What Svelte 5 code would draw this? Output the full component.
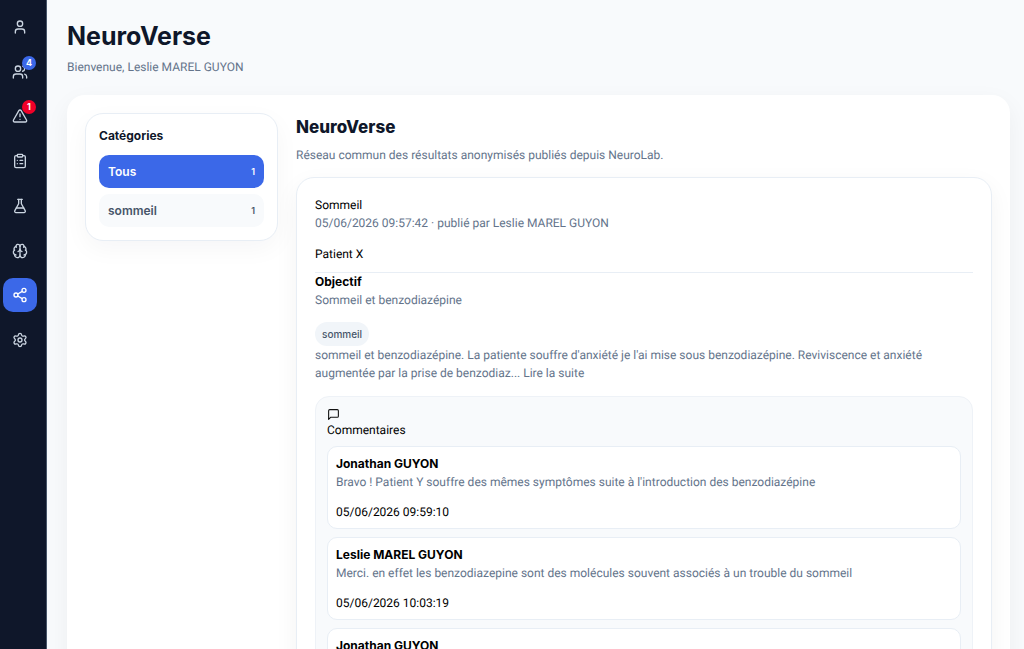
<script lang="ts">
  type NavItem = { label: string; paths: string[]; badge?: number; tone?: string };

  const nav: NavItem[] = [
    {
      label: 'Profil',
      paths: ['M19 21v-2a4 4 0 0 0-4-4H9a4 4 0 0 0-4 4v2', 'M8 7a4 4 0 1 0 8 0a4 4 0 1 0-8 0']
    },
    {
      label: 'Patients',
      badge: 4,
      tone: 'info',
      paths: [
        'M16 21v-2a4 4 0 0 0-4-4H6a4 4 0 0 0-4 4v2',
        'M5 7a4 4 0 1 0 8 0a4 4 0 1 0-8 0',
        'M22 21v-2a4 4 0 0 0-3-3.87',
        'M16 3.13a4 4 0 0 1 0 7.75'
      ]
    },
    {
      label: 'Alertes',
      badge: 1,
      tone: 'danger',
      paths: [
        'm21.73 18-8-14a2 2 0 0 0-3.48 0l-8 14A2 2 0 0 0 4 21h16a2 2 0 0 0 1.73-3',
        'M12 9v4',
        'M12 17h.01'
      ]
    },
    {
      label: 'Questionnaires',
      paths: [
        'M9 2h6a1 1 0 0 1 1 1v2a1 1 0 0 1-1 1H9a1 1 0 0 1-1-1V3a1 1 0 0 1 1-1z',
        'M16 4h2a2 2 0 0 1 2 2v14a2 2 0 0 1-2 2H6a2 2 0 0 1-2-2V6a2 2 0 0 1 2-2h2',
        'M12 11h4',
        'M12 16h4',
        'M8 11h.01',
        'M8 16h.01'
      ]
    },
    {
      label: 'NeuroLab',
      paths: [
        'M14 2v6a2 2 0 0 0 .245.96l5.51 10.08A2 2 0 0 1 18 22H6a2 2 0 0 1-1.755-2.96l5.51-10.08A2 2 0 0 0 10 8V2',
        'M6.453 15h11.094',
        'M8.5 2h7'
      ]
    },
    {
      label: 'Cerveau',
      paths: [
        'M12 18V5',
        'M15 13a4.17 4.17 0 0 1-3-4 4.17 4.17 0 0 1-3 4',
        'M17.598 6.5A3 3 0 1 0 12 5a3 3 0 1 0-5.598 1.5',
        'M17.997 5.125a4 4 0 0 1 2.526 5.77',
        'M18 18a4 4 0 0 0 2-7.464',
        'M19.967 17.483A4 4 0 1 1 12 18a4 4 0 1 1-7.967-.517',
        'M6 18a4 4 0 0 1-2-7.464',
        'M6.003 5.125a4 4 0 0 0-2.526 5.77'
      ]
    },
    {
      label: 'NeuroVerse',
      paths: [
        'M15 5a3 3 0 1 0 6 0a3 3 0 1 0-6 0',
        'M3 12a3 3 0 1 0 6 0a3 3 0 1 0-6 0',
        'M15 19a3 3 0 1 0 6 0a3 3 0 1 0-6 0',
        'M8.59 13.51l6.83 3.98',
        'M15.41 6.51l-6.82 3.98'
      ]
    },
    {
      label: 'Paramètres',
      paths: [
        'M9.671 4.136a2.34 2.34 0 0 1 4.659 0 2.34 2.34 0 0 0 3.319 1.915 2.34 2.34 0 0 1 2.33 4.033 2.34 2.34 0 0 0 0 3.831 2.34 2.34 0 0 1-2.33 4.033 2.34 2.34 0 0 0-3.319 1.915 2.34 2.34 0 0 1-4.659 0 2.34 2.34 0 0 0-3.32-1.915 2.34 2.34 0 0 1-2.33-4.033 2.34 2.34 0 0 0 0-3.831A2.34 2.34 0 0 1 6.35 6.051a2.34 2.34 0 0 0 3.319-1.915',
        'M9 12a3 3 0 1 0 6 0a3 3 0 1 0-6 0'
      ]
    }
  ];

  const categories = [
    { name: 'Tous', count: 1 },
    { name: 'sommeil', count: 1 }
  ];

  const comments = [
    {
      author: 'Jonathan GUYON',
      text: "Bravo ! Patient Y souffre des mêmes symptômes suite à l'introduction des benzodiazépine",
      date: '05/06/2026 09:59:10'
    },
    {
      author: 'Leslie MAREL GUYON',
      text: 'Merci. en effet les benzodiazepine sont des molécules souvent associés à un trouble du sommeil',
      date: '05/06/2026 10:03:19'
    },
    { author: 'Jonathan GUYON', text: '', date: '' }
  ];

  let page = 'NeuroVerse';
  let category = 'Tous';
</script>

<div class="app">
  <nav class="sidebar">
    <div class="nav-list">
      {#each nav as item}
        <button
          class="nav-item"
          class:active={page === item.label}
          aria-label={item.label}
          on:click={() => (page = item.label)}
        >
          <svg class="icon" viewBox="0 0 24 24">
            {#each item.paths as d}<path {d} />{/each}
          </svg>
          {#if item.badge}
            <span class="badge {item.tone}">{item.badge}</span>
          {/if}
        </button>
      {/each}
    </div>
  </nav>

  <main>
    <header>
      <h1>NeuroVerse</h1>
      <p>Bienvenue, Leslie MAREL GUYON</p>
    </header>

    <div class="panel">
      <aside class="categories">
        <h3>Catégories</h3>
        {#each categories as cat}
          <button
            class="category"
            class:selected={category === cat.name}
            on:click={() => (category = cat.name)}
          >
            <span>{cat.name}</span>
            <small>{cat.count}</small>
          </button>
        {/each}
      </aside>

      <section class="feed">
        <h2>NeuroVerse</h2>
        <p class="intro">Réseau commun des résultats anonymisés publiés depuis NeuroLab.</p>

        <article class="post">
          <div class="dark">Sommeil</div>
          <p>05/06/2026 09:57:42 · publié par Leslie MAREL GUYON</p>
          <div class="patient">Patient X</div>

          <div class="goal">
            <strong>Objectif</strong>
            <p>Sommeil et benzodiazépine</p>
          </div>

          <span class="tag">sommeil</span>
          <p>
            sommeil et benzodiazépine. La patiente souffre d'anxiété je l'ai mise sous benzodiazépine.
            Reviviscence et anxiété augmentée par la prise de benzodiaz...
            <a href="#suite">Lire la suite</a>
          </p>

          <div class="comments">
            <svg class="icon small" viewBox="0 0 24 24">
              <path d="M21 15a2 2 0 0 1-2 2H7l-4 4V5a2 2 0 0 1 2-2h14a2 2 0 0 1 2 2z" />
            </svg>
            <div class="dark">Commentaires</div>
            <div class="comment-list">
              {#each comments as comment}
                <div class="comment">
                  <strong>{comment.author}</strong>
                  <p>{comment.text}</p>
                  <time>{comment.date}</time>
                </div>
              {/each}
            </div>
          </div>
        </article>
      </section>
    </div>
  </main>
</div>

<style>
  :global(body) {
    background: #f8fafc;
    overflow: hidden;
  }

  .app {
    display: flex;
    height: 100vh;
    font-family: Inter, sans-serif;
    font-size: 12px;
    line-height: 18px;
    color: #64748b;
  }

  h1,
  h2,
  h3,
  p {
    margin: 0;
  }

  p,
  .dark,
  .patient,
  time {
    font-family: Roboto, sans-serif;
    text-rendering: geometricPrecision;
  }

  button {
    border: none;
    font-family: inherit;
    cursor: pointer;
  }

  .sidebar {
    flex: none;
    box-sizing: border-box;
    width: 47px;
    padding: 10px 3px;
    background: #0f172a;
    border-right: 1px solid #475569;
  }

  .nav-list {
    display: flex;
    flex-direction: column;
    justify-content: space-between;
    height: 347px;
  }

  .nav-item {
    position: relative;
    display: flex;
    align-items: center;
    justify-content: center;
    width: 34px;
    height: 34px;
    padding: 0;
    border-radius: 10px;
    background: transparent;
    color: #cbd5e1;
  }

  .nav-item.active {
    background: #3b68e8;
    color: #fff;
  }

  .icon {
    display: block;
    width: 16px;
    height: 16px;
    fill: none;
    stroke: currentColor;
    stroke-width: 2;
    stroke-linecap: round;
    stroke-linejoin: round;
  }

  .icon.small {
    width: 13px;
    height: 13px;
    color: #111;
  }

  .badge {
    position: absolute;
    top: 1px;
    right: 1px;
    width: 14px;
    height: 14px;
    border-radius: 50%;
    color: #fff;
    font-size: 9px;
    font-weight: 700;
    line-height: 14px;
    text-align: center;
  }

  .badge.info {
    background: #3b68e8;
  }

  .badge.danger {
    background: #f00028;
  }

  main {
    flex: 1;
    min-width: 0;
    padding: 20px 14px 20px 20px;
    overflow: hidden;
  }

  header {
    margin-bottom: 19px;
  }

  h1 {
    margin-bottom: 6px;
    color: #0f172a;
    font-size: 25px;
    font-weight: 700;
    line-height: 32px;
  }

  .panel {
    display: flex;
    align-items: flex-start;
    gap: 18px;
    padding: 18px;
    border-radius: 18px;
    background: #fff;
    box-shadow: 0 8px 24px rgba(15, 23, 42, 0.05);
  }

  .categories {
    flex: none;
    display: flex;
    flex-direction: column;
    gap: 6px;
    box-sizing: border-box;
    width: 193px;
    padding: 13px;
    border: 1px solid #e8eef5;
    border-radius: 18px;
    background: #fff;
    box-shadow: 0 8px 24px rgba(15, 23, 42, 0.04);
  }

  h3 {
    margin-bottom: 4px;
    color: #0f172a;
    font-size: 12px;
    font-weight: 700;
  }

  .category {
    display: flex;
    align-items: center;
    justify-content: space-between;
    height: 33px;
    padding: 0 9px;
    border-radius: 10px;
    background: #f8fafc;
    color: #475569;
    font-size: 12px;
    font-weight: 600;
  }

  .category small {
    font-size: 9px;
  }

  .category.selected {
    background: #3b68e8;
    color: #fff;
  }

  .feed {
    flex: 1;
    min-width: 0;
  }

  h2 {
    margin-bottom: 5px;
    color: #0f172a;
    font-size: 17px;
    font-weight: 800;
    line-height: 28px;
  }

  .intro {
    margin-bottom: 13px;
  }

  .post {
    padding: 18px;
    border: 1px solid #e8eef5;
    border-radius: 18px;
    background: #fff;
    box-shadow: 0 8px 24px rgba(15, 23, 42, 0.05);
  }

  .dark,
  .patient,
  time,
  strong {
    display: block;
    color: #000;
  }

  .patient {
    margin-top: 13px;
  }

  .goal {
    margin: 9px 0 13px;
    border-top: 1px solid #e8eef5;
  }

  .tag {
    display: inline-block;
    padding: 3px 7px;
    border-radius: 999px;
    background: #f1f5f9;
    color: #475569;
    font-size: 10px;
    font-weight: 500;
  }

  a {
    color: inherit;
    text-decoration: none;
  }

  .comments {
    margin-top: 14px;
    padding: 11px;
    border: 1px solid #eef2f7;
    border-radius: 14px;
    background: #f8fafc;
  }

  .comment-list {
    display: flex;
    flex-direction: column;
    gap: 8px;
    margin-top: 7px;
  }

  .comment {
    padding: 8px;
    border: 1px solid #e8eef5;
    border-radius: 10px;
    background: #fff;
  }

  .comment p {
    min-height: 18px;
    margin-bottom: 13px;
  }

  .comment time {
    min-height: 16px;
    line-height: 16px;
  }
</style>
